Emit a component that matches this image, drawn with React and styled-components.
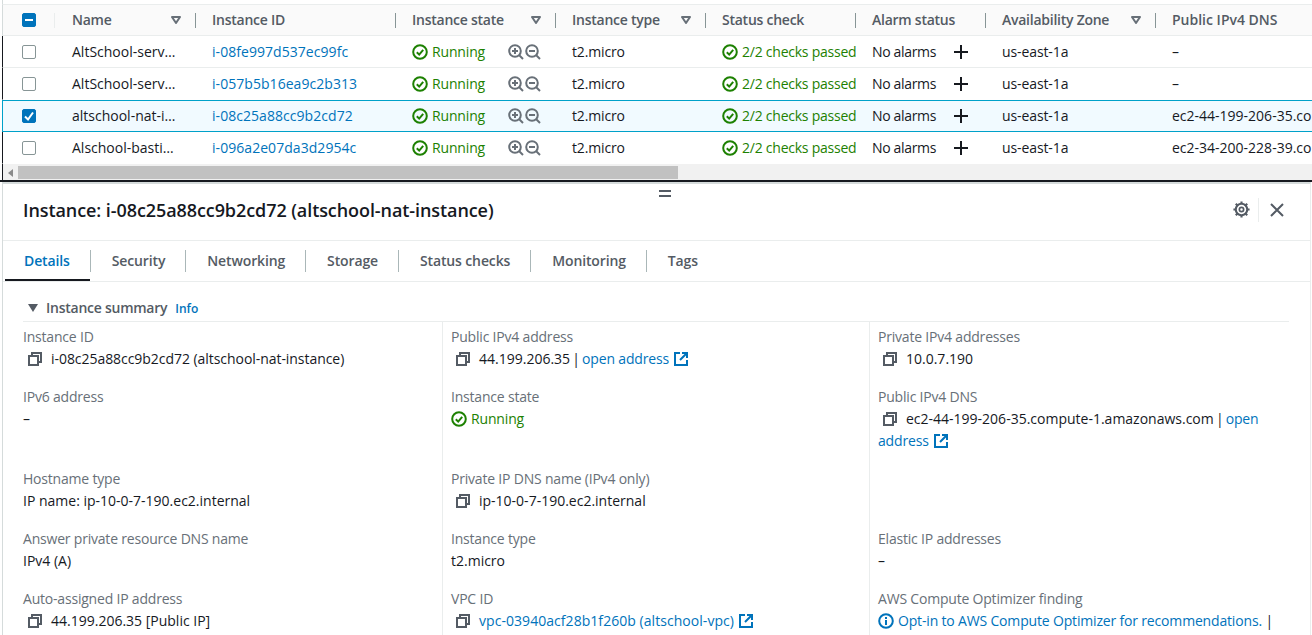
import React from "react";
import styled, { createGlobalStyle } from "styled-components";

const Global = createGlobalStyle`
  html, body { margin: 0; padding: 0; background: #fff; }
  body { font-family: "Open Sans", "Noto Sans", sans-serif; font-size: 14px; line-height: 22px; color: #16191f; overflow: hidden; }
`;

const COLUMNS = "54px 140px 200px 160px 150px 150px 130px 170px 1fr";

const Page = styled.div`
  width: 1312px; height: 635px; overflow: hidden;
  display: flex; flex-direction: column; padding-left: 2px; box-sizing: border-box; position: relative;
`;
const TableTop = styled.div`
  height: 4px; border-left: 1px solid #d5dbdb; border-bottom: 1px solid #eaeded;
`;
const HeadRow = styled.div`
  display: grid; grid-template-columns: ${COLUMNS}; height: 31px; box-sizing: border-box;
  background: #fafafa; border-left: 1px solid #d5dbdb; border-bottom: 1px solid #eaeded; overflow: hidden;
`;
const HeadCell = styled.div`
  display: flex; align-items: center; padding-left: 15px; min-width: 0;
  font-weight: 600; color: #545b64; white-space: nowrap;
  letter-spacing: ${p => (p.$plain ? "0" : "-0.25px")};
`;
const HeadLabel = styled.span`flex: 1;`;
const Caret = styled.svg`width: 10px; height: 8px; margin-right: 14px; flex: none;`;
const HeadDivider = styled.i`
  display: block; width: 1px; height: 15px; background: #879596; margin-right: 1px; flex: none;
`;
const CheckCell = styled.div`
  display: flex; align-items: center; padding-left: 19px;
`;
const CheckDivider = styled.i`
  display: block; width: 1px; height: 15px; background: #eaeded; margin-left: 18px; flex: none;
`;
const Box = styled.span`
  display: flex; align-items: center; justify-content: center; flex: none;
  width: 14px; height: 14px; box-sizing: border-box; border-radius: 2px;
  background: ${p => (p.$on ? "#0073bb" : "#fff")};
  border: 1px solid ${p => (p.$on ? "#0073bb" : "#879596")};
`;
const Row = styled.div`
  display: grid; grid-template-columns: ${COLUMNS}; height: 32px; box-sizing: border-box;
  border-left: 1px solid ${p => (p.$selected ? "#00a1c9" : "#16191f")};
  border-bottom: 1px solid ${p => (p.$selected ? "#00a1c9" : p.$noRule ? "#fff" : "#eaeded")};
  background: ${p => (p.$selected ? "#f1faff" : "#fff")};
  ${p => p.$selected && "box-shadow: inset 0 1px 0 #00a1c9;"}
  overflow: hidden;
`;
const Cell = styled.div`
  display: flex; align-items: center; padding-left: 15px; min-width: 0; overflow: hidden; white-space: nowrap;
  letter-spacing: ${p => p.$track || "-0.15px"};
  color: ${p => (p.$tone === "link" ? "#0073bb" : p.$tone === "ok" ? "#1d8102" : "#16191f")};
`;
const ZoomPair = styled.span`display: flex; flex: none; gap: 1px; margin-left: 23px;`;
const AddAlarm = styled.svg`width: 16px; height: 16px; margin-left: 17px; flex: none;`;
const Scrollbar = styled.div`
  height: 16px; background: #f1f1f1; border-left: 1px solid #16191f; display: flex; align-items: flex-end;
`;
const ScrollArrow = styled.svg`width: 5px; height: 8px; margin: 0 0 3px 5px; flex: none;`;
const ScrollThumb = styled.div`height: 13px; width: 660px; margin-left: 5px; background: #c1c1c1; margin-bottom: 1px;`;
const Splitter = styled.div`height: 2px; background: #16191f; margin-left: -2px;`;
const Handle = styled.div`
  position: absolute; left: 659px; top: 190px; width: 12px; height: 3px;
  border-top: 2px solid #545b64; border-bottom: 2px solid #545b64;
`;
const Panel = styled.section`
  flex: 1; border-top: 2px solid #d5dbdb; border-left: 1px solid #d5dbdb; border-right: 1px solid #eaeded;
  margin-right: 1px; min-height: 0;
`;
const PanelHead = styled.header`
  height: 57px; box-sizing: border-box; display: flex; align-items: center; padding: 0 26px 5px 20px;
  border-bottom: 1px solid #eaeded;
`;
const Title = styled.h2`margin: 0; flex: 1; font-size: 18px; font-weight: 600; line-height: 22px; color: #16191f; letter-spacing: -0.08px;`;
const HeadAction = styled.svg`width: 17px; height: 17px; flex: none;`;
const ActionDivider = styled.i`display: block; width: 1px; height: 24px; background: #eaeded; margin: 0 11px 0 8px;`;
const CloseIcon = styled.svg`width: 14px; height: 14px; flex: none;`;
const Tabs = styled.nav`
  display: flex; height: 41px; box-sizing: border-box; border-bottom: 1px solid #eaeded; padding-left: 2px;
`;
const Tab = styled.div`
  display: flex; align-items: center; height: 40px; padding: 0 ${p => (p.$active ? "20px 0 19px" : "20px 0 21px")};
  font-weight: 600; letter-spacing: -0.13px; color: ${p => (p.$active ? "#0073bb" : "#545b64")};
  ${p => p.$active && "box-shadow: inset 0 -2px 0 #16191f;"}
`;
const TabDivider = styled.i`display: block; width: 1px; height: 22px; background: #aab7b8; align-self: center; flex: none; margin-top: -1px;`;
const SectionHead = styled.div`
  display: flex; align-items: center; height: 40px; box-sizing: border-box; margin: 0 21px 0 20px;
  border-bottom: 1px solid #eaeded; padding: 13px 0 0 5px;
`;
const SectionTitle = styled.span`font-weight: 600; color: #545b64; margin-left: 8px; letter-spacing: -0.25px;`;
const InfoLink = styled.span`font-size: 12px; font-weight: 600; color: #0073bb; margin-left: 8px; padding-top: 1px;`;
const Details = styled.div`
  display: grid; grid-template-columns: 419px 427px 420px; grid-template-rows: 64px 82px 60px 60px 60px; margin-left: 20px;
`;
const Field = styled.div`
  padding: 4px 0 0 ${p => (p.$first ? "0" : "8px")};
  border-left: ${p => (p.$first ? "none" : "1px solid #eaeded")};
  box-sizing: border-box;
  &:nth-child(n + 4) { padding-top: 0; }
`;
const Label = styled.div`color: #687078; line-height: 22px; letter-spacing: -0.2px;`;
const Value = styled.div`line-height: 22px; color: #16191f; word-spacing: ${p => (p.$tight ? "-1.5px" : "0")}; letter-spacing: ${p => p.$track || "0"};`;
const CopyWrap = styled.span`display: inline-block; width: 14px; height: 14px; margin: 0 9px 0 5px; vertical-align: -2px;`;
const Link = styled.span`color: #0073bb; word-spacing: 0; letter-spacing: ${p => p.$track || "-0.17px"};`;
const ExtWrap = styled.svg`width: 14px; height: 14px; margin-left: 5px; vertical-align: -2px;`;
const OkText = styled.span`color: #1d8102; letter-spacing: -0.15px;`;
const InlineIcon = styled.svg`width: 16px; height: 16px; flex: none; vertical-align: -3px; margin-right: 4px;`;

const CaretIcon = () => (
  <Caret viewBox="0 0 10 8"><path d="M1 1h8L5 7z" fill="none" stroke="#687078" strokeWidth="2" strokeLinejoin="round" /></Caret>
);
const OkIcon = () => (
  <InlineIcon viewBox="0 0 16 16" fill="none" stroke="#1d8102" strokeWidth="2">
    <circle cx="8" cy="8" r="6.8" /><path d="M4.8 8.2 7.2 10.6 11.2 5.8" />
  </InlineIcon>
);
const InfoIcon = () => (
  <InlineIcon viewBox="0 0 16 16" fill="none" stroke="#0073bb" strokeWidth="2">
    <circle cx="8" cy="8" r="6.8" /><path d="M8 7v5M8 4v2" />
  </InlineIcon>
);
const Magnify = ({ minus }) => (
  <svg width="16" height="16" viewBox="0 0 16 16" fill="none" stroke="#687078" strokeWidth="2">
    <circle cx="7" cy="7" r="5.8" /><path d="M11 11l4 4" /><path d={minus ? "M4 7h6" : "M4 7h6M7 4v6"} />
  </svg>
);
const CopyIcon = () => (
  <CopyWrap>
    <svg width="14" height="14" viewBox="0 0 14 14" fill="none" stroke="#545b64" strokeWidth="2" style={{ display: "block" }}>
      <path d="M4 4V1h9v9h-3" /><rect x="1" y="4" width="9" height="9" />
    </svg>
  </CopyWrap>
);
const ExtIcon = () => (
  <ExtWrap viewBox="0 0 14 14" fill="none" stroke="#0073bb" strokeWidth="2">
    <path d="M6 1H1v12h12V8" /><path d="M8 1h5v5M13 1 6 8" />
  </ExtWrap>
);

const rows = [
  ["AltSchool-serv…", "i-08fe997d537ec99fc", "–"],
  ["AltSchool-serv…", "i-057b5b16ea9c2b313", "–"],
  ["altschool-nat-i…", "i-08c25a88cc9b2cd72", "ec2-44-199-206-35.compute-1.amazonaws.com", true],
  ["Alschool-basti…", "i-096a2e07da3d2954c", "ec2-34-200-228-39.compute-1.amazonaws.com"],
];
const heads = [
  ["Name", true], ["Instance ID", false], ["Instance state", true], ["Instance type", true],
  ["Status check", false], ["Alarm status", false], ["Availability Zone", true],
];
const tabs = ["Details", "Security", "Networking", "Storage", "Status checks", "Monitoring", "Tags"];

export default function App() {
  return (
    <Page>
      <Global />
      <TableTop />
      <HeadRow>
        <CheckCell>
          <Box $on><svg width="10" height="10" viewBox="0 0 10 10"><path d="M1 5h8" stroke="#fff" strokeWidth="2" /></svg></Box>
          <CheckDivider />
        </CheckCell>
        {heads.map(([h, sort]) => (
          <HeadCell key={h}>
            <HeadLabel>{h}</HeadLabel>
            {sort && <CaretIcon />}
            <HeadDivider />
          </HeadCell>
        ))}
        <HeadCell $plain>Public IPv4 DNS</HeadCell>
      </HeadRow>
      {rows.map(([name, id, dns, sel], i) => (
        <Row key={id} $selected={sel} $noRule={i === 1 || i === 3}>
          <CheckCell>
            <Box $on={sel}>
              {sel && <svg width="12" height="12" viewBox="0 0 12 12" fill="none"><path d="M2 6.5 5 9.5 10 2.5" stroke="#fff" strokeWidth="2" /></svg>}
            </Box>
          </CheckCell>
          <Cell $track="0">{name}</Cell>
          <Cell $tone="link" $track="0.05px">{id}</Cell>
          <Cell $tone="ok"><OkIcon /><span>Running</span><ZoomPair><Magnify /><Magnify minus /></ZoomPair></Cell>
          <Cell>t2.micro</Cell>
          <Cell $tone="ok" $track="-0.24px"><OkIcon /><span>2/2 checks passed</span></Cell>
          <Cell $track="-0.33px">No alarms<AddAlarm viewBox="0 0 16 16"><path d="M8 1v14M1 8h14" stroke="#16191f" strokeWidth="2" /></AddAlarm></Cell>
          <Cell $track="-0.1px">us-east-1a</Cell>
          <Cell $track="0">{dns}</Cell>
        </Row>
      ))}
      <Scrollbar>
        <ScrollArrow viewBox="0 0 5 8"><path d="M5 0v8L0 4z" fill="#8a8a8a" /></ScrollArrow>
        <ScrollThumb />
      </Scrollbar>
      <Splitter />
      <Handle />
      <Panel>
        <PanelHead>
          <Title>Instance: i-08c25a88cc9b2cd72 (altschool-nat-instance)</Title>
          <HeadAction viewBox="0 0 16 16" fill="none" stroke="#545b64">
            <circle cx="8" cy="8" r="5.4" strokeWidth="2" />
            <circle cx="8" cy="8" r="2" strokeWidth="1.6" />
            <path d="M8 .4v2.4M8 13.2v2.4M.4 8h2.4M13.2 8h2.4M2.6 2.6l1.7 1.7M11.7 11.7l1.7 1.7M13.4 2.6l-1.7 1.7M4.3 11.7l-1.7 1.7" strokeWidth="2" />
          </HeadAction>
          <ActionDivider />
          <CloseIcon viewBox="0 0 14 14" fill="none" stroke="#545b64" strokeWidth="2"><path d="M1 1l12 12M13 1 1 13" /></CloseIcon>
        </PanelHead>
        <Tabs>
          {tabs.map((t, i) => (
            <React.Fragment key={t}>
              <Tab $active={i === 0}>{t}</Tab>
              {i < tabs.length - 1 && <TabDivider />}
            </React.Fragment>
          ))}
        </Tabs>
        <SectionHead>
          <svg width="10" height="8" viewBox="0 0 10 8"><path d="M0 0h10L5 8z" fill="#545b64" /></svg>
          <SectionTitle>Instance summary</SectionTitle>
          <InfoLink>Info</InfoLink>
        </SectionHead>
        <Details>
          <Field $first><Label>Instance ID</Label><Value $track="-0.05px"><CopyIcon />i-08c25a88cc9b2cd72 (altschool-nat-instance)</Value></Field>
          <Field><Label>Public IPv4 address</Label><Value $tight><CopyIcon />44.199.206.35 | <Link>open address</Link><ExtIcon /></Value></Field>
          <Field><Label>Private IPv4 addresses</Label><Value><CopyIcon />10.0.7.190</Value></Field>

          <Field $first><Label>IPv6 address</Label><Value>–</Value></Field>
          <Field><Label>Instance state</Label><Value><OkIcon /><OkText>Running</OkText></Value></Field>
          <Field><Label>Public IPv4 DNS</Label><Value $tight><CopyIcon />ec2-44-199-206-35.compute-1.amazonaws.com | <Link>open address</Link><ExtIcon /></Value></Field>

          <Field $first><Label>Hostname type</Label><Value>IP name: ip-10-0-7-190.ec2.internal</Value></Field>
          <Field><Label>Private IP DNS name (IPv4 only)</Label><Value><CopyIcon />ip-10-0-7-190.ec2.internal</Value></Field>
          <Field />

          <Field $first><Label>Answer private resource DNS name</Label><Value>IPv4 (A)</Value></Field>
          <Field><Label>Instance type</Label><Value>t2.micro</Value></Field>
          <Field><Label>Elastic IP addresses</Label><Value>–</Value></Field>

          <Field $first><Label>Auto-assigned IP address</Label><Value><CopyIcon />44.199.206.35 [Public IP]</Value></Field>
          <Field><Label>VPC ID</Label><Value><CopyIcon /><Link $track="0.05px">vpc-03940acf28b1f260b (altschool-vpc)</Link><ExtIcon /></Value></Field>
          <Field><Label>AWS Compute Optimizer finding</Label><Value><InfoIcon /><Link>Opt-in to AWS Compute Optimizer for recommendations.</Link> |</Value></Field>
        </Details>
      </Panel>
    </Page>
  );
}
